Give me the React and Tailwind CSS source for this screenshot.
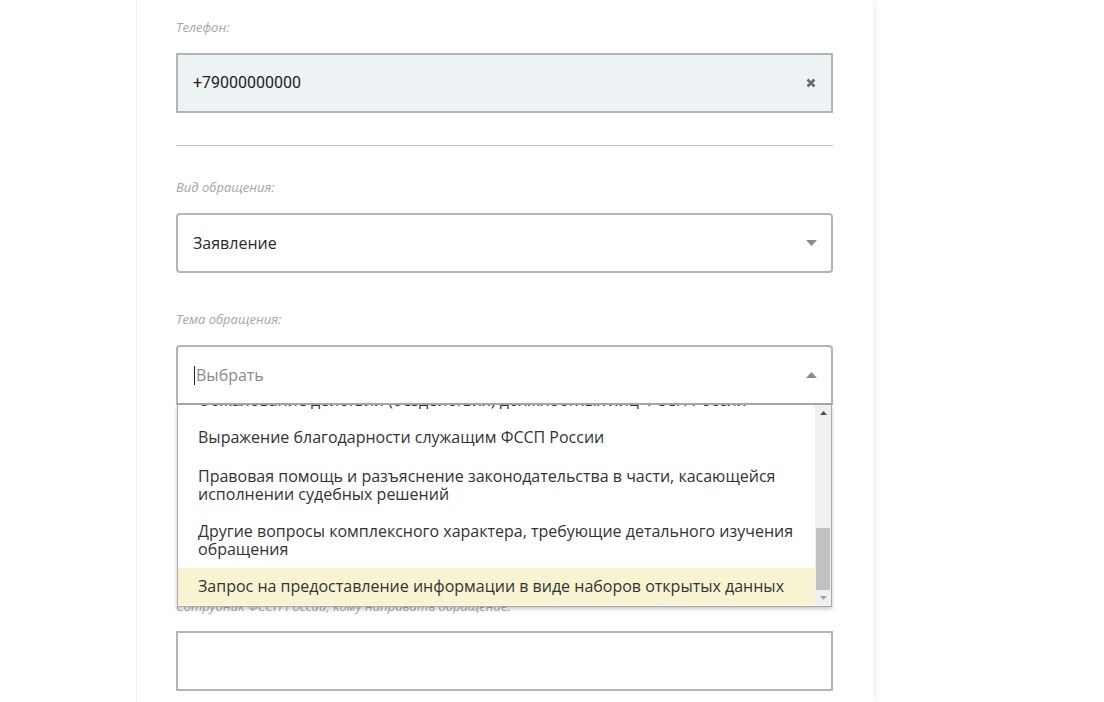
import React from "react";

const labelCls =
  "block h-[16px] text-[13px] leading-[16px] italic text-[#a6a6a6] [font-family:'Open_Sans',sans-serif]";

function CaretDown() {
  return (
    <svg width="11" height="6" viewBox="0 0 11 6" className="block">
      <path d="M0 0 L11 0 L5.5 6 Z" fill="#8a8a8a" />
    </svg>
  );
}
function CaretUp() {
  return (
    <svg width="11" height="6" viewBox="0 0 11 6" className="block">
      <path d="M0 6 L11 6 L5.5 0 Z" fill="#8a8a8a" />
    </svg>
  );
}

const items = [
  { t: "Обжалование действий (бездействия) должностных лиц ФССП России", cls: "pt-[9px] pb-[10px]" },
  { t: "Выражение благодарности служащим ФССП России", cls: "pt-[9px] pb-[12px]" },
  {
    t: "Правовая помощь и разъяснение законодательства в части, касающейся исполнении судебных решений",
    cls: "pt-[9px] pb-[10px]",
  },
  {
    t: "Другие вопросы комплексного характера, требующие детального изучения обращения",
    cls: "pt-[9px] pb-[10px]",
  },
  {
    t: "Запрос на предоставление информации в виде наборов открытых данных",
    cls: "pt-[9px] pb-[10px] bg-[#f8f4d2]",
  },
];

export default function App() {
  return (
    <div className="w-[1104px] h-[702px] overflow-hidden bg-white relative [font-family:'Open_Sans',sans-serif]">
      <div className="ml-[136px] w-[737px] h-[702px] bg-white border-l border-[#f0f0f0] shadow-[4px_0_6px_rgba(0,0,0,0.045)]">
        <div className="pl-[39px] pr-[40px] pt-[19px] w-[736px]">
          {/* Phone */}
          <span className={labelCls}>Телефон:</span>
          <div className="mt-[18px] h-[60px] border-2 border-[#b4b4b4] bg-[#edf2f5] flex items-center pl-[15px] pr-[15px]">
            <span className="flex-1 text-[16px] text-[#222] [font-family:Roboto,sans-serif]">
              +79000000000
            </span>
            <svg width="10" height="10" viewBox="0 0 10 10" className="block">
              <path d="M1.5 1.5 L8.5 8.5 M8.5 1.5 L1.5 8.5" stroke="#6b6b6b" strokeWidth="2.6" strokeLinecap="butt" />
            </svg>
          </div>

          <div className="mt-[32px] h-px bg-[#c4c4c4]" />

          {/* Вид обращения */}
          <span className={`${labelCls} mt-[33px]`}>Вид обращения:</span>
          <div className="mt-[18px] h-[60px] border-2 border-[#b4b4b4] rounded-[4px] bg-white flex items-center pl-[15px] pr-[14px]">
            <span className="flex-1 text-[16px] text-[#2a2a2a]">Заявление</span>
            <CaretDown />
          </div>

          {/* Тема обращения */}
          <span className={`${labelCls} mt-[38px]`}>Тема обращения:</span>
          <div className="relative mt-[18px]">
            <div className="h-[60px] border-2 border-[#b4b4b4] border-b-[#a8a8a8] rounded-t-[4px] bg-white flex items-center pl-[16px] pr-[14px]">
              <span className="w-px h-[19px] bg-[#222] mr-[1px]" />
              <span className="flex-1 text-[16px] text-[#8a8a8a]">Выбрать</span>
              <CaretUp />
            </div>

            {/* Dropdown overlay */}
            <div className="absolute z-10 left-[1px] right-[1px] top-full h-[202px] bg-white border-x border-b border-[#a9a9a9] shadow-[0_2px_4px_rgba(0,0,0,0.22)] flex">
              <div className="flex-1 overflow-hidden">
                <div className="-mt-[23px]">
                  {items.map((it, i) => (
                    <div
                      key={i}
                      className={`pl-[20px] pr-[16px] text-[16px] leading-[18px] text-[#333] ${it.cls}`}
                    >
                      {it.t}
                    </div>
                  ))}
                </div>
              </div>
              <div className="w-[16px] bg-[#f0f0f0] flex flex-col items-center">
                <div className="h-[17px] flex items-center justify-center">
                  <svg width="7" height="4" viewBox="0 0 7 4">
                    <path d="M0 4 L7 4 L3.5 0 Z" fill="#505050" />
                  </svg>
                </div>
                <div className="flex-1 w-full px-[1px] flex flex-col">
                  <div className="h-[106px]" />
                  <div className="h-[62px] bg-[#c1c1c1]" />
                </div>
                <div className="h-[17px] flex items-center justify-center">
                  <svg width="7" height="4" viewBox="0 0 7 4">
                    <path d="M0 0 L7 0 L3.5 4 Z" fill="#a3a3a3" />
                  </svg>
                </div>
              </div>
            </div>
          </div>

          {/* Hidden field behind dropdown */}
          <div className="h-[193px]" />

          <span className={labelCls}>Сотрудник ФССП России, кому направить обращение:</span>
          <div className="mt-[17px] h-[60px] border-2 border-[#b4b4b4] bg-white" />
        </div>
      </div>
    </div>
  );
}
